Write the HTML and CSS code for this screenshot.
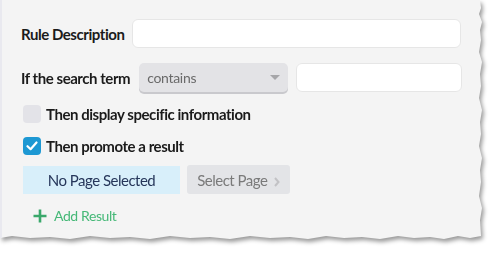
FILE: index.html
```html
<!DOCTYPE html>
<html lang="en">
<head>
  <meta charset="UTF-8">
  <title>Rule</title>
  <link rel="stylesheet" href="styles.css">
</head>
<body>
  <div class="sheet">
    <div class="panel">
      <div class="row row-desc">
        <label class="label">Rule Description</label>
        <input class="field field-desc" type="text">
      </div>

      <div class="row row-term">
        <label class="label">If the search term</label>
        <div class="select">
          <span>contains</span>
          <span class="caret"></span>
        </div>
        <input class="field field-term" type="text">
      </div>

      <div class="check-row row-info">
        <span class="box"></span>
        <span class="check-text">Then display specific information</span>
      </div>

      <div class="check-row row-promote">
        <span class="box checked">
          <svg width="12" height="10" viewBox="0 0 12 10"><path d="M1.5 5.2 L4.6 8.2 L10.5 1.5" fill="none" stroke="#fff" stroke-width="2.2" stroke-linecap="round" stroke-linejoin="round"/></svg>
        </span>
        <span class="check-text">Then promote a result</span>
      </div>

      <div class="row row-page">
        <div class="no-page">No Page Selected</div>
        <button class="select-page">Select Page
          <svg class="chev" width="6" height="10" viewBox="0 0 6 10"><path d="M1 1 L4.5 5 L1 9" fill="none" stroke="#c2c2c5" stroke-width="2"/></svg>
        </button>
      </div>

      <div class="add-result">
        <svg width="14" height="14" viewBox="0 0 14 14"><path d="M7 0.5 V13.5 M0.5 7 H13.5" stroke="#3aa86b" stroke-width="2.6"/></svg>
        <span>Add Result</span>
      </div>
    </div>
  </div>
</body>
</html>
```

FILE: styles.css
```css
body {
  margin: 0;
  background: #ffffff;
  font-family: Lato, "Open Sans", sans-serif;
}
.sheet {
  width: 493px;
  height: 254px;
  filter: drop-shadow(2px 3px 2px rgba(0, 0, 0, 0.4));
}
.panel {
  box-sizing: border-box;
  width: 484px;
  height: 242px;
  background: #f4f4f4;
  border-left: 2px solid #e9e9ef;
  padding: 19px 0 0 19px;
  clip-path: polygon(0 0, 480px 0, 481px 8px, 479px 14px, 482px 22px, 480px 30px, 481px 40px, 479px 52px, 482px 62px, 480px 74px, 481px 86px, 479px 98px, 482px 110px, 480px 122px, 481px 134px, 479px 146px, 482px 158px, 480px 170px, 481px 182px, 479px 196px, 482px 208px, 480px 220px, 481px 236px, 470px 238px, 458px 236px, 444px 239px, 430px 237px, 414px 238px, 398px 236px, 380px 239px, 362px 237px, 344px 238px, 326px 236px, 308px 239px, 290px 237px, 270px 238px, 250px 236px, 230px 239px, 210px 237px, 190px 238px, 170px 236px, 150px 239px, 130px 237px, 110px 238px, 90px 236px, 70px 239px, 50px 237px, 30px 238px, 12px 236px, 0 238px);
}
.row {
  display: flex;
  align-items: center;
}
.label {
  font-weight: bold;
  font-size: 15px;
  letter-spacing: -0.45px;
  color: #1b1b1b;
}
.field {
  box-sizing: border-box;
  height: 29px;
  background: #fff;
  border: 1px solid #e6e6e6;
  border-radius: 6px;
  outline: none;
}
.field-desc {
  width: 329px;
  margin-left: 8px;
}
.row-term {
  margin-top: 15px;
}
.select {
  box-sizing: border-box;
  width: 149px;
  height: 29px;
  margin-left: 9px;
  padding: 0 8px;
  display: flex;
  align-items: center;
  justify-content: space-between;
  background: #e3e3e6;
  border-radius: 5px;
  box-shadow: 0 2px 0 #c9c9cd;
  font-size: 14px;
  letter-spacing: -0.3px;
  color: #6a6a6a;
}
.caret {
  width: 0;
  height: 0;
  border-left: 5px solid transparent;
  border-right: 5px solid transparent;
  border-top: 5px solid #a6a6a9;
}
.field-term {
  width: 166px;
  margin-left: 8px;
}
.check-row {
  display: flex;
  align-items: center;
  margin-left: 2px;
}
.row-info {
  margin-top: 13px;
}
.row-promote {
  margin-top: 14px;
}
.box {
  box-sizing: border-box;
  width: 18px;
  height: 18px;
  border-radius: 4px;
  background: #e3e3e8;
  display: flex;
  align-items: center;
  justify-content: center;
}
.box.checked {
  background: #1d98d3;
}
.check-text {
  margin-left: 5px;
  font-weight: bold;
  font-size: 15px;
  letter-spacing: -0.45px;
  color: #1b1b1b;
}
.row-page {
  margin-top: 10px;
  margin-left: 2px;
}
.no-page {
  width: 157px;
  height: 28px;
  line-height: 28px;
  text-align: center;
  background: #d8effa;
  color: #26365a;
  font-size: 15px;
  letter-spacing: -0.5px;
}
.select-page {
  margin-left: 7px;
  width: 103px;
  height: 29px;
  border: none;
  border-radius: 3px;
  background: #e3e4e7;
  color: #7a7a7a;
  font-family: inherit;
  font-size: 15px;
  letter-spacing: -0.5px;
  padding: 0;
}
.chev {
  margin-left: 3px;
  vertical-align: -1px;
}
.add-result {
  display: flex;
  align-items: center;
  margin: 13px 0 0 12px;
  color: #45b877;
  font-size: 14px;
  letter-spacing: -0.4px;
}
.add-result span {
  margin-left: 7px;
}
```
